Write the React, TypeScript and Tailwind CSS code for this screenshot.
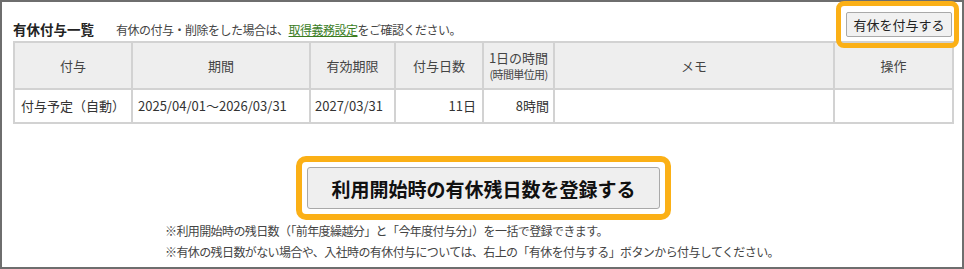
const font = { fontFamily: '"Noto Sans CJK JP", "Noto Sans", sans-serif' };

const headers = [
  { label: "付与", w: "w-[118px]" },
  { label: "期間", w: "w-[178px]" },
  { label: "有効期限", w: "w-[85px]" },
  { label: "付与日数", w: "w-[88px]" },
  { label: "", w: "w-[71px]" },
  { label: "メモ", w: "w-[280px]" },
  { label: "操作", w: "w-[119px]" },
];

const App = () => {
  return (
    <div style={font} className="w-[964px] h-[269px] bg-white border-2 border-[#6e6e6e] text-[#333]">
      <div className="flex flex-col pl-[11px] pr-[10px] pt-[10px]">
        <div className="flex justify-between items-end h-[25px]">
          <div className="flex items-baseline pb-[1px]">
            <h2 className="text-[13.5px] font-bold text-[#222] leading-none">有休付与一覧</h2>
            <p className="ml-[22px] text-[12px] tracking-[-0.5px] leading-none text-[#444]">
              有休の付与・削除をした場合は、
              <a href="#" className="text-[#3b7d1f] underline">取得義務設定</a>
              をご確認ください。
            </p>
          </div>
          <div className="relative">
            <button type="button" className="h-[25px] w-[106px] bg-[#f1f1f1] border border-[#a9a9a9] rounded-[2px] text-[13px] text-[#222] leading-none">
              有休を付与する
            </button>
            <div className="absolute -left-[10px] -right-[7px] -top-[10px] -bottom-[11px] border-[5px] border-[#fbb016] rounded-[8px] pointer-events-none"></div>
          </div>
        </div>

        <table className="mt-[4px] w-[940px] table-fixed border-collapse text-[13px]">
          <thead>
            <tr className="h-[47px] bg-[#eeeeee]">
              {headers.map((h, i) => (
                <th key={i} className={`${h.w} border-2 border-[#d2d2d2] font-normal text-center text-[#444]`}>
                  {i === 4 ? (
                    <div className="flex flex-col items-center leading-[17px]">
                      <span>1日の時間</span>
                      <span className="text-[11px] tracking-[-0.6px]">(時間単位用)</span>
                    </div>
                  ) : (
                    h.label
                  )}
                </th>
              ))}
            </tr>
          </thead>
          <tbody>
            <tr className="h-[34px]">
              <td className="border-2 border-[#d2d2d2] px-[6px] whitespace-nowrap">付与予定（自動）</td>
              <td className="border-2 border-[#d2d2d2] px-[5px] whitespace-nowrap">2025/04/01～2026/03/31</td>
              <td className="border-2 border-[#d2d2d2] px-[4px] whitespace-nowrap">2027/03/31</td>
              <td className="border-2 border-[#d2d2d2] px-[6px] text-right">11日</td>
              <td className="border-2 border-[#d2d2d2] px-[4px] text-right">8時間</td>
              <td className="border-2 border-[#d2d2d2]"></td>
              <td className="border-2 border-[#d2d2d2]"></td>
            </tr>
          </tbody>
        </table>

        <div className="flex justify-center mt-[43px]">
          <div className="relative ml-[2px]">
            <button type="button" className="h-[42px] w-[353px] bg-[#efefef] border border-[#a9a9a9] rounded-[3px] text-[19px] font-bold text-[#111] leading-none">
              利用開始時の有休残日数を登録する
            </button>
            <div className="absolute -inset-[11px] border-[6px] border-[#fbb016] rounded-[10px] pointer-events-none"></div>
          </div>
        </div>

        <div className="mt-[11px] ml-[152px] flex flex-col text-[12px] leading-[21px] tracking-[-0.6px] text-[#444]">
          <p>※利用開始時の残日数（「前年度繰越分」と「今年度付与分」）を一括で登録できます。</p>
          <p>※有休の残日数がない場合や、入社時の有休付与については、右上の「有休を付与する」ボタンから付与してください。</p>
        </div>
      </div>
    </div>
  );
};

export default App;
